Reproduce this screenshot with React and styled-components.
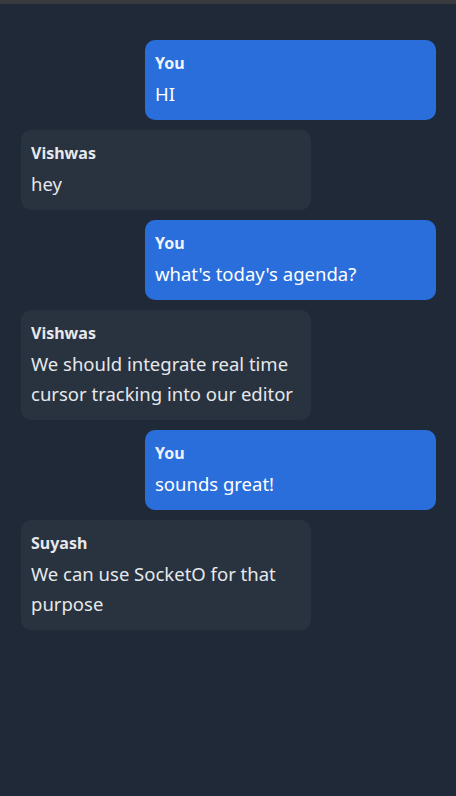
import React from 'react'
import styled, { createGlobalStyle } from 'styled-components'

const GlobalStyle = createGlobalStyle`
  html, body {
    margin: 0;
    padding: 0;
    background: #1f2937;
  }
  body {
    font-family: "Noto Sans", "Open Sans", sans-serif;
  }
`

const messages = [
  { id: 1, user: 'You', text: 'HI', mine: true },
  { id: 2, user: 'Vishwas', text: 'hey' },
  { id: 3, user: 'You', text: "what's today's agenda?", mine: true },
  { id: 4, user: 'Vishwas', text: 'We should integrate real time cursor tracking into our editor' },
  { id: 5, user: 'You', text: 'sounds great!', mine: true },
  { id: 6, user: 'Suyash', text: 'We can use SocketO for that purpose' },
]

const ChatPage = () => {
  return (
    <Page>
      <GlobalStyle />
      <TopStrip />
      <MessageList>
        {messages.map((m) => (
          <Bubble key={m.id} $mine={m.mine}>
            <Sender $mine={m.mine}>{m.user}</Sender>
            <Body>{m.text}</Body>
          </Bubble>
        ))}
      </MessageList>
    </Page>
  )
}

const Page = styled.div
`
min-height: 796px;
background: #1f2937;
display: flex;
flex-direction: column;
`

const TopStrip = styled.div
`
height: 4px;
background: #3a393e;
`

const MessageList = styled.div
`
display: flex;
flex-direction: column;
gap: 10px;
padding: 36px 20px 20px 21px;
`

const Bubble = styled.div
`
width: ${(p) => (p.$mine ? '291px' : '290px')};
box-sizing: border-box;
align-self: ${(p) => (p.$mine ? 'flex-end' : 'flex-start')};
background: ${(p) => (p.$mine ? '#2a6edc' : '#29323f')};
color: ${(p) => (p.$mine ? '#ffffff' : '#e6e8ec')};
border-radius: 10px;
padding: 12px 10px 11px;
`

const Sender = styled.div
`
font-size: 16px;
font-weight: 700;
line-height: 23px;
margin-bottom: 4px;
color: ${(p) => (p.$mine ? '#eef3fc' : '#e6e8ec')};
`

const Body = styled.div
`
font-size: 18.5px;
line-height: 30px;
`

export default ChatPage
